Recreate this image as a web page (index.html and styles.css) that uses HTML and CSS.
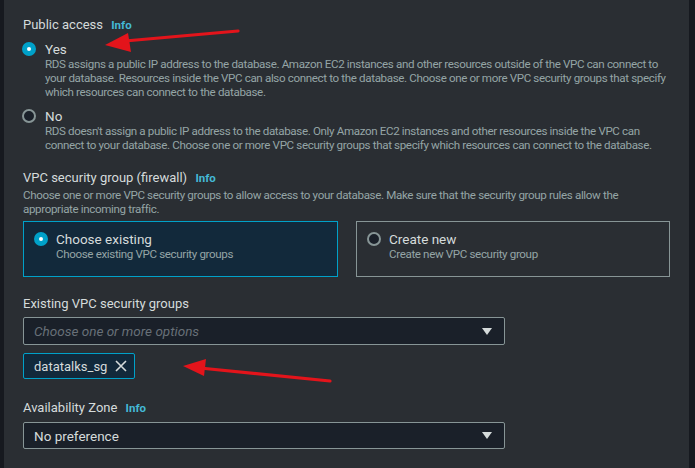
FILE: index.html
```html
<!DOCTYPE html>
<html>
<head>
<meta charset="utf-8">
<link rel="stylesheet" href="styles.css">
</head>
<body>
<div class="page">
  <div class="strip strip-left"></div>
  <main class="content">
    <section class="field field-first">
      <div class="label">Public access <span class="info">Info</span></div>
      <div class="option">
        <span class="radio radio-on"></span>
        <div class="opt-body">
          <div class="opt-title">Yes</div>
          <div class="desc">RDS assigns a public IP address to the database. Amazon EC2 instances and other resources outside of the VPC can connect to<br>your database. Resources inside the VPC can also connect to the database. Choose one or more VPC security groups that specify<br>which resources can connect to the database.</div>
        </div>
      </div>
      <div class="option option-next">
        <span class="radio"></span>
        <div class="opt-body">
          <div class="opt-title">No</div>
          <div class="desc">RDS doesn't assign a public IP address to the database. Only Amazon EC2 instances and other resources inside the VPC can<br>connect to your database. Choose one or more VPC security groups that specify which resources can connect to the database.</div>
        </div>
      </div>
    </section>

    <section class="field field-vpc">
      <div class="label">VPC security group (firewall) <span class="info">Info</span></div>
      <div class="desc">Choose one or more VPC security groups to allow access to your database. Make sure that the security group rules allow the<br>appropriate incoming traffic.</div>
      <div class="cards">
        <div class="card card-on">
          <span class="radio radio-on"></span>
          <div class="opt-body">
            <div class="opt-title">Choose existing</div>
            <div class="desc">Choose existing VPC security groups</div>
          </div>
        </div>
        <div class="card">
          <span class="radio"></span>
          <div class="opt-body">
            <div class="opt-title">Create new</div>
            <div class="desc">Create new VPC security group</div>
          </div>
        </div>
      </div>
    </section>

    <section class="field field-sg">
      <div class="label">Existing VPC security groups</div>
      <div class="select">
        <span class="placeholder">Choose one or more options</span>
        <span class="caret"></span>
      </div>
      <div class="tag">
        <span>datatalks_sg</span>
        <svg class="tag-x" width="12" height="12" viewBox="0 0 12 12"><path d="M1 1 L11 11 M11 1 L1 11" stroke="#d5dbdb" stroke-width="1.6" fill="none"/></svg>
      </div>
    </section>

    <section class="field field-az">
      <div class="label">Availability Zone <span class="info">Info</span></div>
      <div class="select">
        <span class="value">No preference</span>
        <span class="caret"></span>
      </div>
    </section>
  </main>
  <div class="strip strip-right"></div>

  <svg class="arrows" width="695" height="468" viewBox="0 0 695 468">
    <line x1="238" y1="31" x2="125" y2="41" stroke="#e3141b" stroke-width="3.2" stroke-linecap="round"/>
    <polygon points="105,45 128,33 131,52" fill="#e3141b"/>
    <line x1="330" y1="381" x2="200" y2="368" stroke="#e3141b" stroke-width="3.2" stroke-linecap="round"/>
    <polygon points="183,366 206,359 204,376" fill="#e3141b"/>
  </svg>
</div>
</body>
</html>
```

FILE: styles.css
```css
* { box-sizing: border-box; }

html, body {
  margin: 0;
  padding: 0;
  background: #2a2e33;
}

body {
  font-family: Roboto, "Liberation Sans", Arial, sans-serif;
  color: #d5dbdb;
  width: 695px;
  height: 468px;
  overflow: hidden;
}

.page {
  position: relative;
  display: flex;
  height: 468px;
}

.strip { background: #16191f; flex: none; }
.strip-left { width: 4px; }
.strip-right { width: 6px; }

.content {
  flex: 1;
  min-width: 0;
  padding: 15px 19px 0 19px;
}

.field { margin-top: 16px; }
.field-first { margin-top: 0; }
.field-vpc { margin-top: 16px; }
.field-sg { margin-top: 17px; }
.field-az { margin-top: 19px; }

.label {
  font-size: 13px;
  line-height: 20px;
  color: #d5dbdb;
}

.info {
  color: #44b9d6;
  font-weight: 700;
  font-size: 11.5px;
  margin-left: 5px;
}

.desc {
  font-size: 11.6px;
  letter-spacing: -0.36px;
  line-height: 14px;
  color: #95a5a6;
  white-space: nowrap;
}

.option {
  display: flex;
  align-items: flex-start;
  margin-top: 6px;
}
.option-next { margin-top: 9px; }

.radio {
  flex: none;
  width: 14px;
  height: 14px;
  border-radius: 50%;
  border: 2px solid #879596;
  background: #1a2029;
  margin-top: 1px;
  margin-right: 8px;
}
.radio-on {
  border: 5px solid #00a1c9;
  background: #ffffff;
}

.option .radio { margin-left: -1px; margin-right: 9px; }

.opt-title {
  font-size: 13.5px;
  line-height: 16px;
  color: #d5dbdb;
}

.cards {
  display: grid;
  grid-template-columns: 315px 314px;
  column-gap: 18px;
  margin-top: 5px;
}

.card {
  display: flex;
  align-items: flex-start;
  height: 56px;
  padding: 9px 10px 0 10px;
  border: 1px solid #879596;
}
.card .radio { margin-top: 1px; margin-right: 8px; }
.card-on {
  border-color: #00a1c9;
  background: #12293b;
}

.select {
  display: flex;
  align-items: center;
  justify-content: space-between;
  width: 482px;
  height: 28px;
  margin-top: 3px;
  padding: 0 10px;
  background: #1a2029;
  border: 1px solid #879596;
  border-radius: 2px;
}
.field-az .select { margin-top: 4px; height: 27px; }
.placeholder {
  font-style: italic;
  font-size: 13.5px;
  color: #687078;
}
.value {
  font-size: 13.5px;
  color: #d5dbdb;
}
.caret {
  width: 0;
  height: 0;
  border-left: 5px solid transparent;
  border-right: 5px solid transparent;
  border-top: 7px solid #d5dbdb;
  margin-right: 2px;
}

.tag {
  display: flex;
  align-items: center;
  width: 112px;
  height: 26px;
  margin-top: 8px;
  padding: 0 7px 0 10px;
  justify-content: space-between;
  background: #12293b;
  border: 1px solid #00a1c9;
  border-radius: 2px;
  font-size: 13px;
  color: #d5dbdb;
}

.arrows {
  position: absolute;
  left: 0;
  top: 0;
  pointer-events: none;
}
```
